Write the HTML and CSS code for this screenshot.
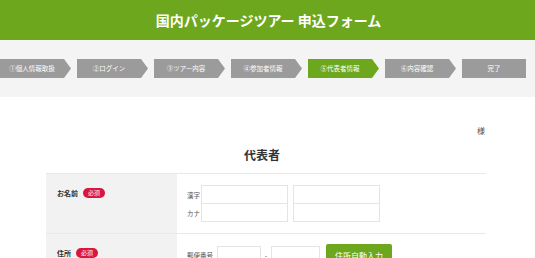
FILE: index.html
```html
<!DOCTYPE html>
<html lang="ja">
<head>
    <meta charset="UTF-8">
    <title>国内パッケージツアー 申込フォーム</title>
    <link rel="stylesheet" href="styles.css">
</head>
<body>
    <header class="site-header">
        <h1>国内パッケージツアー 申込フォーム</h1>
    </header>

    <div class="steps-band">
        <ol class="steps">
            <li class="step">①個人情報取扱</li>
            <li class="step">②ログイン</li>
            <li class="step">③ツアー内容</li>
            <li class="step">④参加者情報</li>
            <li class="step active">⑤代表者情報</li>
            <li class="step">⑥内容確認</li>
            <li class="step last">完了</li>
        </ol>
    </div>

    <main class="form-wrap">
        <p class="honorific">様</p>
        <h2 class="section-title">代表者</h2>

        <div class="form-table">
            <div class="form-row">
                <div class="form-label">お名前 <span class="badge">必須</span></div>
                <div class="form-field">
                    <div class="name-line">
                        <span class="sub-label">漢字</span>
                        <input type="text" class="text-input name-input">
                        <input type="text" class="text-input name-input">
                    </div>
                    <div class="name-line kana">
                        <span class="sub-label">カナ</span>
                        <input type="text" class="text-input name-input">
                        <input type="text" class="text-input name-input">
                    </div>
                </div>
            </div>
            <div class="form-row">
                <div class="form-label">住所 <span class="badge">必須</span></div>
                <div class="form-field">
                    <div class="zip-line">
                        <span class="sub-label">郵便番号</span>
                        <input type="text" class="text-input zip1">
                        <span class="dash">-</span>
                        <input type="text" class="text-input zip2">
                        <button class="auto-btn">住所自動入力</button>
                    </div>
                </div>
            </div>
        </div>
    </main>
</body>
</html>
```

FILE: styles.css
```css
body {
    margin: 0;
    font-family: "Noto Sans CJK JP", "Noto Sans", sans-serif;
    color: #333;
    background: #fff;
    overflow: hidden;
}

/* Header */
.site-header {
    height: 40px;
    background: #6ca71e;
    display: flex;
    justify-content: center;
    align-items: center;
}

.site-header h1 {
    margin: 0;
    padding-left: 2px;
    font-size: 14px;
    font-weight: bold;
    color: #fff;
}

/* Steps */
.steps-band {
    background: #f4f4f4;
    height: 57px;
    padding-top: 19px;
    box-sizing: border-box;
}

.steps {
    list-style: none;
    margin: 0;
    padding: 0;
    display: flex;
    gap: 6px;
}

.step {
    width: 71px;
    height: 19px;
    padding-right: 7px;
    box-sizing: border-box;
    background: #9b9b9b;
    color: #fff;
    font-size: 6.5px;
    line-height: 19px;
    text-align: center;
    clip-path: polygon(0 0, 64px 0, 71px 50%, 64px 100%, 0 100%);
}

.step.active {
    background: #6ca71e;
}

.step.last {
    width: 64px;
    padding-right: 0;
    clip-path: none;
}

/* Form */
.form-wrap {
    width: 440px;
    margin: 0 0 0 46px;
    padding-top: 28px;
}

.honorific {
    margin: 0;
    text-align: right;
    font-size: 8px;
    line-height: 12px;
    padding-right: 1px;
    color: #555;
}

.section-title {
    margin: 10px 0 0;
    text-align: center;
    font-size: 12px;
    line-height: 16px;
    font-weight: bold;
    color: #333;
    padding-right: 8px;
}

.form-table {
    margin-top: 10px;
    border-top: 1px solid #e8e8e8;
}

.form-row {
    display: flex;
    border-bottom: 1px solid #e8e8e8;
}

.form-label {
    width: 131px;
    flex-shrink: 0;
    background: #f2f2f2;
    padding: 14px 11px;
    box-sizing: border-box;
    font-size: 7px;
    line-height: 10px;
    font-weight: bold;
    display: flex;
    align-items: flex-start;
    gap: 5px;
}

.badge {
    display: inline-block;
    background: #d8173f;
    color: #fff;
    font-size: 6px;
    font-weight: normal;
    line-height: 10px;
    height: 10px;
    padding: 0 5px;
    border-radius: 5px;
}

.form-field {
    flex: 1;
    padding: 11px 10px 11px;
}

.name-line {
    display: flex;
    align-items: center;
    gap: 5px;
}

.name-line.kana {
    margin-top: -1px;
}

.sub-label {
    font-size: 6.5px;
    color: #555;
    line-height: 10px;
}

.name-line .sub-label {
    width: 14px;
    margin-right: -5px;
}

.text-input {
    height: 19px;
    box-sizing: border-box;
    border: 1px solid #e4e4e4;
    background: #fff;
    padding: 0;
    margin: 0;
    outline: none;
}

.name-input {
    width: 87px;
}

.zip-line {
    display: flex;
    align-items: center;
    margin-top: -1px;
}

.zip-line .sub-label {
    width: 30px;
}

.zip1 {
    width: 44px;
}

.dash {
    width: 10px;
    text-align: center;
    font-size: 7px;
    color: #555;
}

.zip2 {
    width: 49px;
}

.auto-btn {
    margin-left: 6px;
    width: 66px;
    height: 22px;
    border: none;
    border-radius: 2px;
    background: #6ca71e;
    color: #fff;
    font-family: inherit;
    font-size: 8px;
    padding: 0;
    cursor: pointer;
}
```
